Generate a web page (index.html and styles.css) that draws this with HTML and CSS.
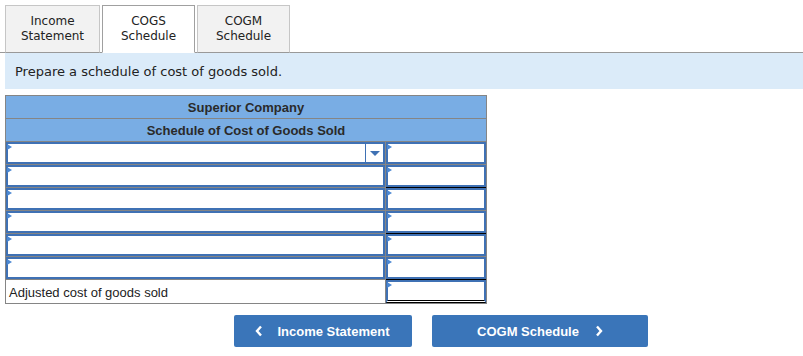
FILE: index.html
```html
<!DOCTYPE html>
<html lang="en">
<head>
    <meta charset="UTF-8">
    <title>COGS Schedule</title>
    <link rel="stylesheet" href="styles.css">
</head>
<body>
    <div class="tabs">
        <div class="tab tab-wide">Income<br>Statement</div>
        <div class="tab active">COGS<br>Schedule</div>
        <div class="tab">COGM<br>Schedule</div>
    </div>
    <div class="prompt">Prepare a schedule of cost of goods sold.</div>

    <div class="sheet">
        <div class="head">Superior Company</div>
        <div class="head">Schedule of Cost of Goods Sold</div>

        <div class="row">
            <div class="cell label mark">
                <div class="select"><span class="caret"></span></div>
            </div>
            <div class="cell amount mark"><input type="text"></div>
        </div>
        <div class="row">
            <div class="cell label mark"><input type="text"></div>
            <div class="cell amount mark"><input type="text" class="total"></div>
        </div>
        <div class="row">
            <div class="cell label mark"><input type="text"></div>
            <div class="cell amount mark"><input type="text"></div>
        </div>
        <div class="row">
            <div class="cell label mark"><input type="text"></div>
            <div class="cell amount mark"><input type="text" class="total"></div>
        </div>
        <div class="row">
            <div class="cell label mark"><input type="text"></div>
            <div class="cell amount mark"><input type="text"></div>
        </div>
        <div class="row">
            <div class="cell label mark"><input type="text"></div>
            <div class="cell amount mark"><input type="text" class="total"></div>
        </div>
        <div class="row last">
            <div class="cell label text">Adjusted cost of goods sold</div>
            <div class="cell amount mark"><input type="text" class="grand"></div>
        </div>
    </div>

    <div class="nav">
        <a href="#" class="btn">
            <svg width="8" height="12" viewBox="0 0 8 12"><polyline points="6,1.5 2,6 6,10.5" fill="none" stroke="#fff" stroke-width="2.4"/></svg>
            Income Statement
        </a>
        <a href="#" class="btn btn-next">
            COGM Schedule
            <svg width="8" height="12" viewBox="0 0 8 12"><polyline points="2,1.5 6,6 2,10.5" fill="none" stroke="#fff" stroke-width="2.4"/></svg>
        </a>
    </div>
</body>
</html>
```

FILE: styles.css
```css
/* Page */
body {
    margin: 0;
    font-family: "DejaVu Sans", Verdana, sans-serif;
    color: #222;
    background: #fff;
}

/* Tabs */
.tabs {
    display: flex;
    gap: 2px;
    padding: 5px 0 0 5px;
    border-bottom: 1px solid #999;
}

.tab {
    box-sizing: border-box;
    width: 93px;
    height: 48px;
    margin-bottom: -1px;
    display: flex;
    align-items: center;
    justify-content: center;
    text-align: center;
    font-size: 12px;
    line-height: 15px;
    background: #f2f2f2;
    border: 1px solid #c6c6c6;
    border-bottom-color: #999;
}

.tab-wide {
    width: 95px;
}

.tab.active {
    background: #fff;
    border-color: #a0a0a0;
    border-bottom-color: #fff;
}

/* Instruction band */
.prompt {
    margin-left: 5px;
    height: 36px;
    padding-left: 10px;
    display: flex;
    align-items: center;
    font-size: 13px;
    background: #dbebf9;
}

/* Worksheet */
.sheet {
    box-sizing: border-box;
    width: 482px;
    margin: 6px 0 0 5px;
    border: 1px solid #858585;
    font-family: "Liberation Sans", Arial, sans-serif;
}

.head {
    height: 22px;
    line-height: 23px;
    text-align: center;
    font-size: 13px;
    font-weight: bold;
    color: #2a2a2a;
    background: #79ade4;
    border-bottom: 1px solid #858585;
}

.row {
    display: flex;
    height: 22px;
    border-bottom: 1px solid #858585;
}

.row.last {
    height: 23px;
    border-bottom: none;
}

.cell {
    position: relative;
    box-sizing: border-box;
    height: 22px;
}

.row.last .cell {
    height: 23px;
}

.label {
    width: 380px;
    border-right: 1px solid #858585;
}

.amount {
    width: 100px;
}

.text {
    padding-left: 3px;
    line-height: 25px;
    font-size: 13px;
    color: #222;
}

/* little blue flag in the corner of each answer box */
.mark::before {
    content: "";
    position: absolute;
    left: 1px;
    top: 2px;
    border-left: 5px solid #4c88d2;
    border-top: 3px solid transparent;
    border-bottom: 3px solid transparent;
    z-index: 2;
}

input[type="text"],
.select {
    box-sizing: border-box;
    display: block;
    width: 100%;
    height: 22px;
    margin: 0;
    padding: 0 4px;
    border: 2px solid #3f71b4;
    background: #fff;
    outline: none;
}

.select {
    display: flex;
    justify-content: flex-end;
    padding: 0;
}

.caret {
    width: 17px;
    border-left: 1px solid #3f71b4;
    display: flex;
    align-items: center;
    justify-content: center;
}

.caret::after {
    content: "";
    border-top: 5px solid #3f71b4;
    border-left: 5px solid transparent;
    border-right: 5px solid transparent;
    margin-top: 1px;
}

input.total {
    box-shadow: 0 1px 0 #000;
}

input.grand {
    height: 23px;
    border-bottom: 3px double #000;
}

/* Navigation buttons */
.nav {
    display: flex;
    gap: 20px;
    margin-top: 11px;
    padding-left: 234px;
}

.btn {
    box-sizing: border-box;
    width: 178px;
    height: 32px;
    display: flex;
    align-items: center;
    justify-content: center;
    gap: 15px;
    text-decoration: none;
    color: #fff;
    font-family: "Liberation Sans", Arial, sans-serif;
    font-size: 13px;
    font-weight: bold;
    background: #3a75b9;
    border-radius: 2px;
    padding-right: 2px;
}

.btn-next {
    width: 216px;
    gap: 16px;
    padding-right: 0;
    padding-left: 0;
}
```
